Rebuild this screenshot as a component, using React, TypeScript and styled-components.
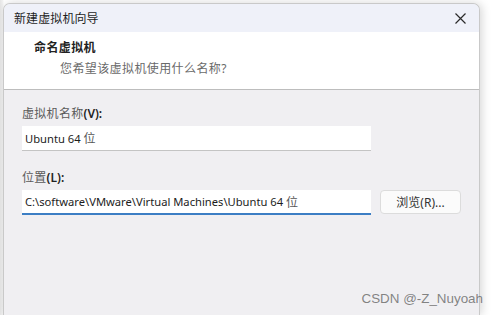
import React from 'react';
import styled, { createGlobalStyle } from 'styled-components';

const GlobalStyle = createGlobalStyle`
  html, body {
    margin: 0;
    padding: 0;
    background: #ffffff;
    overflow: hidden;
  }
  body {
    font-family: "Noto Sans", "Noto Sans CJK SC", sans-serif;
  }
`;

const App: React.FC = () => {
  return (
    <>
      <GlobalStyle />
      <Page>
        <Window>
          <TitleBar>
            <Title>新建虚拟机向导</Title>
            <CloseButton aria-label="close">
              <svg width="11" height="11" viewBox="0 0 11 11">
                <path d="M0.5 0.5 L10.5 10.5 M10.5 0.5 L0.5 10.5" stroke="#2b2b2b" strokeWidth="1.2" />
              </svg>
            </CloseButton>
          </TitleBar>
          <Header>
            <HeaderTitle>命名虚拟机</HeaderTitle>
            <HeaderSub>您希望该虚拟机使用什么名称?</HeaderSub>
          </Header>
          <Body>
            <Label>
              虚拟机名称<Key>(V):</Key>
            </Label>
            <Field>
              Ubuntu 64 <Cjk>位</Cjk>
            </Field>
            <Label $top={19}>
              位置<Key>(L):</Key>
            </Label>
            <Row>
              <Field $active>
                C:\software\VMware\Virtual Machines\Ubuntu 64 <Cjk>位</Cjk>
              </Field>
              <Button>浏览(R)...</Button>
            </Row>
          </Body>
        </Window>
        <Watermark>CSDN @-Z_Nuyoah</Watermark>
      </Page>
    </>
  );
};

export default App;

const Page = styled.div`
  position: relative;
  width: 499px;
  height: 315px;
  overflow: hidden;
  padding: 3px 0 0 3px;
  box-sizing: border-box;
  background: linear-gradient(to right, #e6e6e6 0px, #f4f4f4 3px, #ffffff 4px);
`;

const Window = styled.div`
  width: 477px;
  height: 312px;
  box-sizing: border-box;
  border: 1px solid #c9c9c9;
  border-bottom: none;
  border-radius: 7px 7px 0 0;
  overflow: hidden;
  display: flex;
  flex-direction: column;
  box-shadow: 2px 0 10px rgba(0, 0, 0, 0.16);
  background: #f0eff2;
`;

const TitleBar = styled.div`
  height: 28px;
  flex: none;
  display: flex;
  align-items: center;
  justify-content: space-between;
  padding: 0 10px 0 10px;
  background: #eff1f9;
`;

const Title = styled.span`
  font-size: 12px;
  color: #1e1e1e;
  letter-spacing: 0.1px;
`;

const CloseButton = styled.div`
  width: 22px;
  height: 20px;
  display: flex;
  align-items: center;
  justify-content: center;
  margin-right: -2px;
`;

const Header = styled.div`
  height: 58px;
  flex: none;
  background: #ffffff;
  border-bottom: 1px solid #bdbdbd;
  box-sizing: border-box;
  padding: 7px 0 0 30px;
  display: flex;
  flex-direction: column;
`;

const HeaderTitle = styled.div`
  font-size: 12px;
  font-weight: 700;
  color: #222;
  letter-spacing: 0.4px;
  line-height: 18px;
`;

const HeaderSub = styled.div`
  font-size: 12px;
  color: #6a6a6a;
  letter-spacing: 0.4px;
  line-height: 18px;
  margin: 3px 0 0 26px;
`;

const Body = styled.div`
  flex: 1;
  padding: 16px 0 0 18px;
  display: flex;
  flex-direction: column;
`;

const Label = styled.div<{ $top?: number }>`
  font-size: 12px;
  color: #5a5a5a;
  letter-spacing: 0.3px;
  line-height: 16px;
  margin-top: ${(p) => p.$top ?? 0}px;
  margin-bottom: 4px;
`;

const Key = styled.span`
  color: #222;
  font-weight: 600;
  letter-spacing: 0;
`;

const Field = styled.div<{ $active?: boolean }>`
  width: 349px;
  height: 25px;
  box-sizing: border-box;
  background: #ffffff;
  border-bottom: ${(p) => (p.$active ? '2px solid #3c7ec4' : '1px solid #c4c4c4')};
  padding: 0 0 0 3px;
  display: flex;
  align-items: center;
  font-size: 11.2px;
  color: #1c1c1c;
  white-space: pre;
`;

const Cjk = styled.span`
  font-size: 12px;
  color: #555;
`;

const Row = styled.div`
  display: flex;
  align-items: flex-start;
`;

const Button = styled.div`
  margin-left: 9px;
  width: 81px;
  height: 24px;
  box-sizing: border-box;
  border: 1px solid #dcdcdc;
  border-radius: 4px;
  background: #fbfbfb;
  display: flex;
  align-items: center;
  justify-content: center;
  font-size: 12px;
  color: #333;
`;

const Watermark = styled.div`
  position: absolute;
  right: 16px;
  bottom: 9px;
  font-family: "Liberation Sans", Arial, sans-serif;
  font-size: 13.4px;
  color: rgba(110, 110, 110, 0.85);
`;
